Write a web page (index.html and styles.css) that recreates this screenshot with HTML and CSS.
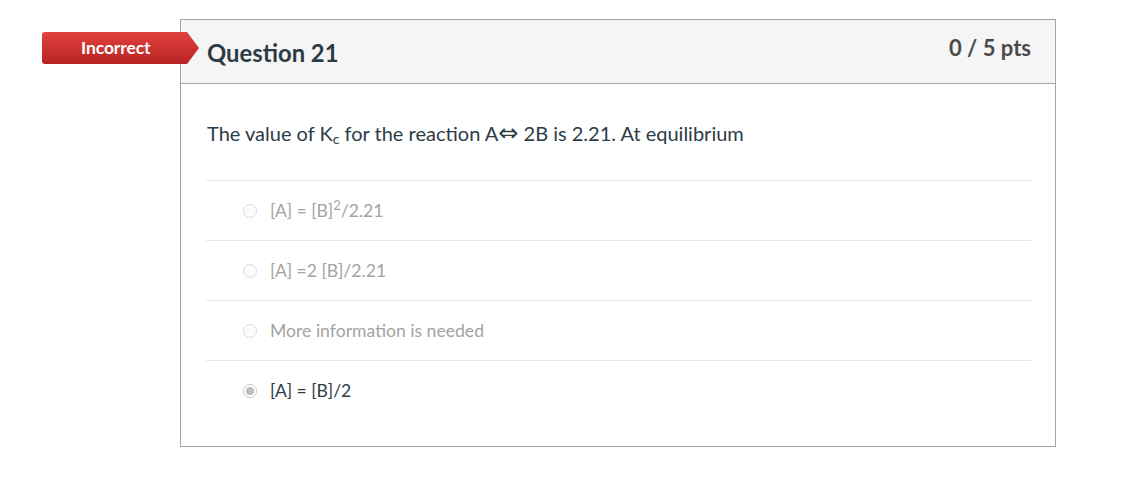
FILE: index.html
```html
<!DOCTYPE html>
<html lang="en">
<head>
<meta charset="utf-8">
<title>Question 21</title>
<link rel="stylesheet" href="styles.css">
</head>
<body>
<div class="page">
  <div class="badge"><span>Incorrect</span></div>
  <div class="card">
    <div class="card-header">
      <h2 class="title">Question 21</h2>
      <div class="pts">0 / 5 pts</div>
    </div>
    <div class="card-body">
      <p class="question">The value of K<sub>c</sub> for the reaction A<span class="arrow">⇔</span> 2B is 2.21. At equilibrium</p>
      <ul class="answers">
        <li class="answer"><span class="radio"></span><span class="label">[A] = [B]<sup>2</sup>/2.21</span></li>
        <li class="answer"><span class="radio"></span><span class="label">[A] =2 [B]/2.21</span></li>
        <li class="answer"><span class="radio"></span><span class="label">More information is needed</span></li>
        <li class="answer selected"><span class="radio"></span><span class="label">[A] = [B]/2</span></li>
      </ul>
    </div>
  </div>
</div>
</body>
</html>
```
FILE: styles.css
```css
* { box-sizing: border-box; }
html, body { margin: 0; padding: 0; background: #fff; }
body { font-family: Lato, "Open Sans", sans-serif; color: #2d3b45; }

.page { position: relative; padding: 19px 0 0 180px; }

.badge {
  position: absolute;
  left: 42px;
  top: 32px;
  width: 157px;
  height: 32px;
  background: linear-gradient(#e2423f, #b72323);
  clip-path: polygon(0 0, 145px 0, 157px 50%, 145px 100%, 0 100%);
  border-radius: 3px 0 0 3px;
  color: #fff;
  font-weight: 700;
  font-size: 17.5px;
  display: flex;
  align-items: center;
  padding-left: 39px;
  letter-spacing: -0.1px;
  z-index: 2;
}
.badge span { margin-top: -1px; }

.card {
  width: 876px;
  height: 428px;
  border: 1px solid #a5a5a5;
}
.card-header {
  height: 64px;
  background: #f5f5f5;
  border-bottom: 1px solid #a5a5a5;
  display: flex;
  justify-content: space-between;
  align-items: flex-start;
  padding: 0 24px 0 26px;
}
.title {
  margin: 0;
  padding-top: 19px;
  font-size: 23.8px;
  font-weight: 700;
  color: #2d3b45;
  line-height: 28px;
}
.pts {
  padding-top: 16px;
  font-size: 22px;
  font-weight: 700;
  color: #4b4b4b;
  line-height: 24px;
}

.card-body { padding: 34px 24px 0 25px; }
.question {
  margin: 0 0 0 1px;
  font-size: 20px;
  line-height: 30px;
  color: #2d3b45;
  height: 62px;
}
.question sub { font-size: 14px; vertical-align: -3px; line-height: 0; }
.arrow { font-family: "DejaVu Sans", sans-serif; font-size: 24px; line-height: 0; color: #2d3b45; }

.answers { list-style: none; margin: 0; padding: 0; }
.answer {
  height: 60px;
  border-top: 1px solid #e6e6e6;
  display: flex;
  align-items: center;
  padding-left: 37px;
  font-size: 17.6px;
  color: #a3a3a3;
}
.radio {
  width: 14px;
  height: 14px;
  border-radius: 50%;
  border: 1px solid #dcdcdc;
  background: #fbfbfb;
  margin-right: 13px;
  flex: none;
  display: flex;
  align-items: center;
  justify-content: center;
}
.label { line-height: 20px; }
.label sup { font-size: 13px; line-height: 0; vertical-align: 7px; }
.selected { color: #2d3b45; }
.selected .radio { border-color: #c8c8c8; background: #fff; }
.selected .radio::after {
  content: "";
  width: 8px;
  height: 8px;
  border-radius: 50%;
  background: #bdbdbd;
}
```
